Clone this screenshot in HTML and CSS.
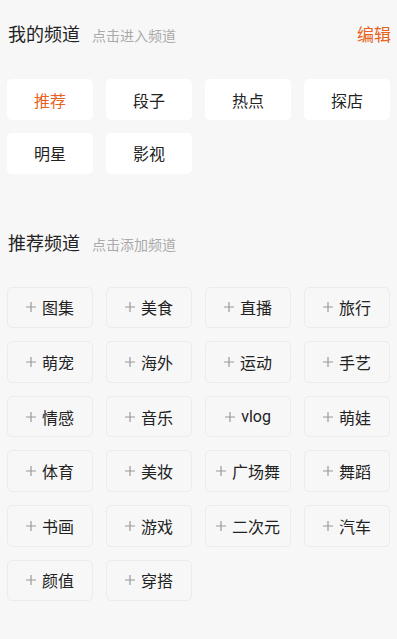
FILE: index.html
```html
<!DOCTYPE html>
<html lang="zh">
<head>
<meta charset="utf-8">
<link rel="stylesheet" href="styles.css">
</head>
<body>
<div class="page">
  <div class="head head-first">
    <div class="head-left">
      <span class="title">我的频道</span>
      <span class="sub">点击进入频道</span>
    </div>
    <span class="edit">编辑</span>
  </div>
  <div class="grid mine">
    <div class="tile active">推荐</div>
    <div class="tile">段子</div>
    <div class="tile">热点</div>
    <div class="tile">探店</div>
    <div class="tile">明星</div>
    <div class="tile">影视</div>
  </div>

  <div class="head head-second">
    <div class="head-left">
      <span class="title">推荐频道</span>
      <span class="sub">点击添加频道</span>
    </div>
  </div>
  <div class="grid rec">
    <div class="tile add"><svg class="plus" viewBox="0 0 11 11"><path d="M5.5 0V11M0 5.5H11"/></svg><span>图集</span></div>
    <div class="tile add"><svg class="plus" viewBox="0 0 11 11"><path d="M5.5 0V11M0 5.5H11"/></svg><span>美食</span></div>
    <div class="tile add"><svg class="plus" viewBox="0 0 11 11"><path d="M5.5 0V11M0 5.5H11"/></svg><span>直播</span></div>
    <div class="tile add"><svg class="plus" viewBox="0 0 11 11"><path d="M5.5 0V11M0 5.5H11"/></svg><span>旅行</span></div>
    <div class="tile add"><svg class="plus" viewBox="0 0 11 11"><path d="M5.5 0V11M0 5.5H11"/></svg><span>萌宠</span></div>
    <div class="tile add"><svg class="plus" viewBox="0 0 11 11"><path d="M5.5 0V11M0 5.5H11"/></svg><span>海外</span></div>
    <div class="tile add"><svg class="plus" viewBox="0 0 11 11"><path d="M5.5 0V11M0 5.5H11"/></svg><span>运动</span></div>
    <div class="tile add"><svg class="plus" viewBox="0 0 11 11"><path d="M5.5 0V11M0 5.5H11"/></svg><span>手艺</span></div>
    <div class="tile add"><svg class="plus" viewBox="0 0 11 11"><path d="M5.5 0V11M0 5.5H11"/></svg><span>情感</span></div>
    <div class="tile add"><svg class="plus" viewBox="0 0 11 11"><path d="M5.5 0V11M0 5.5H11"/></svg><span>音乐</span></div>
    <div class="tile add"><svg class="plus" viewBox="0 0 11 11"><path d="M5.5 0V11M0 5.5H11"/></svg><span>vlog</span></div>
    <div class="tile add"><svg class="plus" viewBox="0 0 11 11"><path d="M5.5 0V11M0 5.5H11"/></svg><span>萌娃</span></div>
    <div class="tile add"><svg class="plus" viewBox="0 0 11 11"><path d="M5.5 0V11M0 5.5H11"/></svg><span>体育</span></div>
    <div class="tile add"><svg class="plus" viewBox="0 0 11 11"><path d="M5.5 0V11M0 5.5H11"/></svg><span>美妆</span></div>
    <div class="tile add"><svg class="plus" viewBox="0 0 11 11"><path d="M5.5 0V11M0 5.5H11"/></svg><span>广场舞</span></div>
    <div class="tile add"><svg class="plus" viewBox="0 0 11 11"><path d="M5.5 0V11M0 5.5H11"/></svg><span>舞蹈</span></div>
    <div class="tile add"><svg class="plus" viewBox="0 0 11 11"><path d="M5.5 0V11M0 5.5H11"/></svg><span>书画</span></div>
    <div class="tile add"><svg class="plus" viewBox="0 0 11 11"><path d="M5.5 0V11M0 5.5H11"/></svg><span>游戏</span></div>
    <div class="tile add"><svg class="plus" viewBox="0 0 11 11"><path d="M5.5 0V11M0 5.5H11"/></svg><span>二次元</span></div>
    <div class="tile add"><svg class="plus" viewBox="0 0 11 11"><path d="M5.5 0V11M0 5.5H11"/></svg><span>汽车</span></div>
    <div class="tile add"><svg class="plus" viewBox="0 0 11 11"><path d="M5.5 0V11M0 5.5H11"/></svg><span>颜值</span></div>
    <div class="tile add"><svg class="plus" viewBox="0 0 11 11"><path d="M5.5 0V11M0 5.5H11"/></svg><span>穿搭</span></div>
  </div>
</div>
</body>
</html>
```

FILE: styles.css
```css
html, body {
  margin: 0;
  padding: 0;
  background: #f7f7f7;
}
body {
  font-family: Roboto, "Noto Sans CJK SC", "Noto Sans", sans-serif;
  color: #222;
}
.page {
  padding: 0 7px;
  height: 639px;
  box-sizing: border-box;
  overflow: hidden;
}
.head {
  display: flex;
  justify-content: space-between;
  align-items: baseline;
  height: 24px;
  line-height: 24px;
}
.head-first {
  padding-top: 23px;
}
.head-second {
  margin-top: 58px;
}
.head-left {
  display: flex;
  align-items: baseline;
  padding-left: 1px;
}
.title {
  font-size: 18px;
  color: #222;
}
.sub {
  font-size: 14px;
  color: #aaa;
  margin-left: 12px;
}
.edit {
  font-size: 17px;
  color: #e8621e;
  margin-right: -1px;
}
.grid {
  display: grid;
  grid-template-columns: repeat(4, 86px);
  column-gap: 13px;
}
.mine {
  row-gap: 12.7px;
  margin-top: 32px;
}
.rec {
  row-gap: 13px;
  margin-top: 31px;
}
.tile {
  display: flex;
  align-items: center;
  justify-content: center;
  font-size: 16px;
  color: #222;
  border-radius: 5px;
  box-sizing: border-box;
}
.mine .tile {
  height: 41px;
  background: #fff;
}
.tile.active {
  color: #e8621e;
}
.rec .tile {
  height: 41.6px;
  border: 1px solid #ececec;
  background: #f7f7f7;
}
.plus {
  width: 10px;
  height: 10px;
  margin-right: 6px;
  stroke: #999;
  stroke-width: 1.3;
  fill: none;
  flex: none;
}
```
